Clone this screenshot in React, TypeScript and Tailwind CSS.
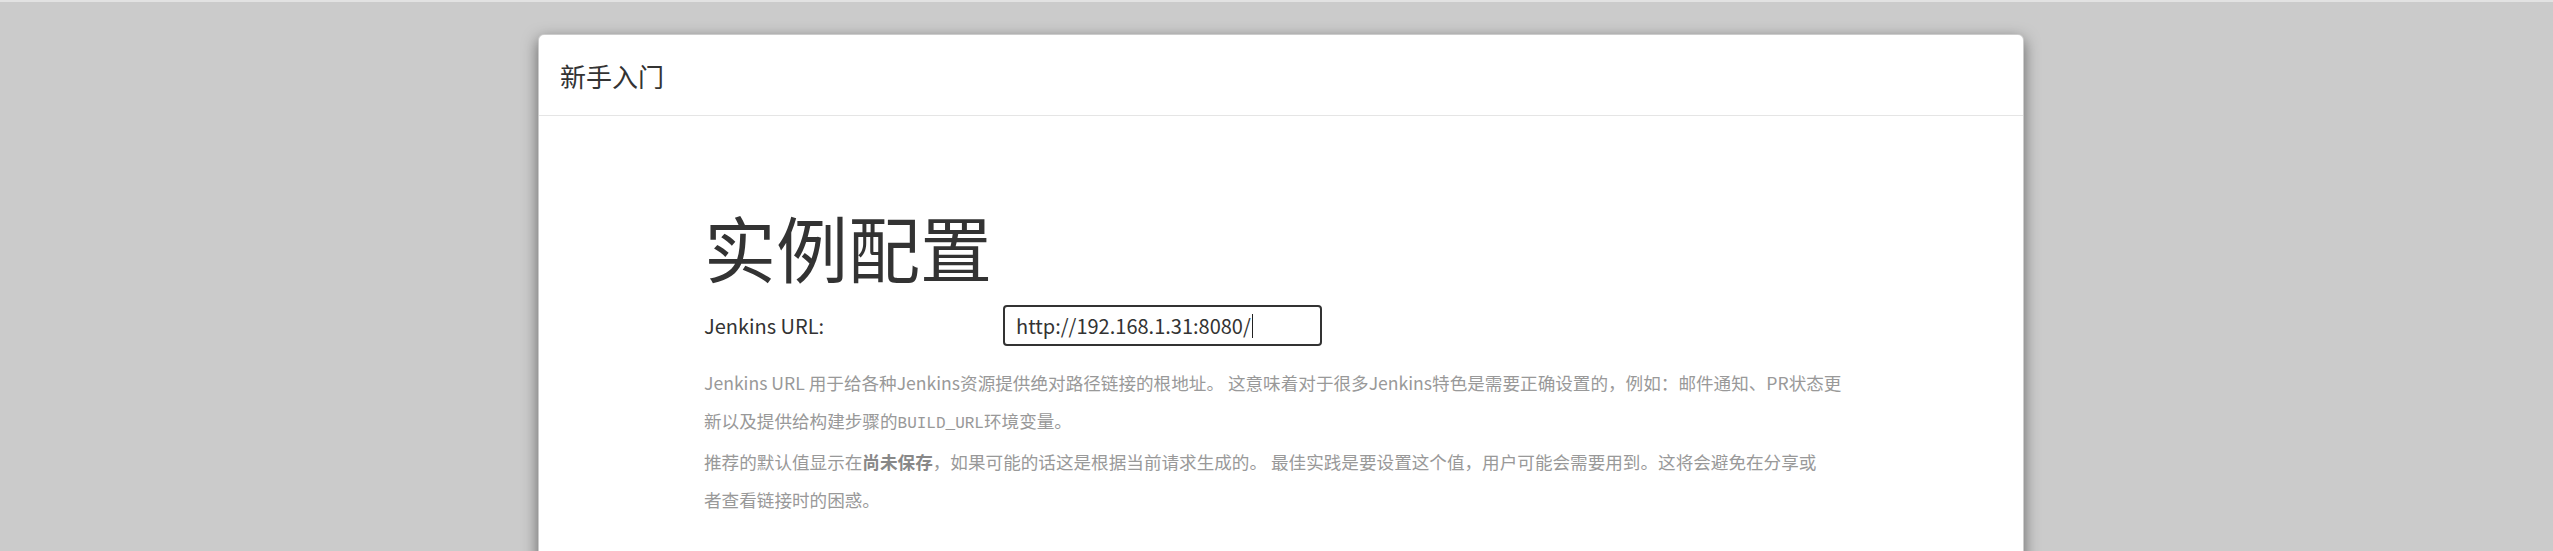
export default function App() {
  return (
    <div className="h-[551px] w-full overflow-hidden border-t-2 border-[#e2e2e2] bg-[#cbcbcb] font-['Noto_Sans_CJK_SC',sans-serif]">
      <div className="ml-[538px] mt-[32px] h-[560px] w-[1486px] rounded-t-[6px] border border-black/20 bg-white shadow-[0_5px_15px_rgba(0,0,0,0.5)]">
        <div className="flex h-[81px] items-center border-b border-[#e5e5e5] px-[21px]">
          <h4 className="text-[26px] text-[#333]">新手入门</h4>
        </div>
        <div className="pl-[165px] pt-[90px]">
          <h1 className="text-[72px] leading-[80px] text-[#333]">实例配置</h1>
          <div className="mt-[19px] flex items-center">
            <label className="w-[299px] text-[20px] text-[#333]">Jenkins URL:</label>
            <div className="flex h-[41px] w-[319px] items-center rounded-[4px] border-2 border-[#333] px-[11px] text-[20px] text-[#333]">
              <span>http://192.168.1.31:8080/</span>
              <span className="ml-px h-[24px] w-px bg-[#222]" />
            </div>
          </div>
          <div className="mt-[18px] whitespace-nowrap text-[17.6px] leading-[37.5px] text-[#999]">
            <p>
              Jenkins URL 用于给各种Jenkins资源提供绝对路径链接的根地址。 这意味着对于很多Jenkins特色是需要正确设置的，例如：邮件通知、PR状态更
              <br />
              新以及提供给构建步骤的
              <code className="font-['Liberation_Mono',monospace] text-[16px]">BUILD_URL</code>
              环境变量。
            </p>
            <p>
              推荐的默认值显示在<strong className="font-bold text-[#888]">尚未保存</strong>，如果可能的话这是根据当前请求生成的。 最佳实践是要设置这个值，用户可能会需要用到。这将会避免在分享或
              <br />
              者查看链接时的困惑。
            </p>
          </div>
        </div>
      </div>
    </div>
  );
}
